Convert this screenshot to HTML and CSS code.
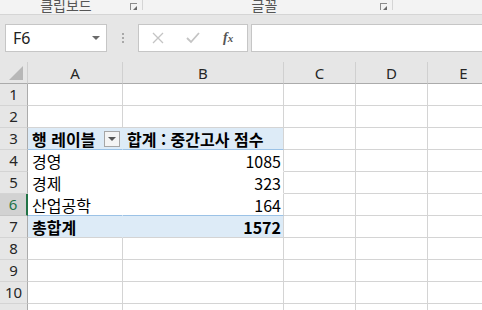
FILE: index.html
```html
<!DOCTYPE html>
<html lang="ko">
<head>
<meta charset="utf-8">
<link rel="stylesheet" href="styles.css">
</head>
<body>
<div class="ribbon">
  <div class="group g1"><span class="glabel">클립보드</span><span class="launcher"></span></div>
  <div class="group g2"><span class="glabel">글꼴</span><span class="launcher"></span></div>
  <div class="group g3"></div>
</div>
<div class="fbar">
  <div class="namebox"><span class="ref">F6</span><span class="caret"></span></div>
  <div class="dots"><i></i><i></i><i></i></div>
  <div class="fbtns">
    <svg class="ico" width="14" height="14" viewBox="0 0 14 14"><path d="M2 2 L12 12 M12 2 L2 12" stroke="#c4c4c4" stroke-width="1.3" fill="none"/></svg>
    <svg class="ico" width="16" height="14" viewBox="0 0 16 14"><path d="M2 7 L6 11 L14 2" stroke="#c4c4c4" stroke-width="1.8" fill="none"/></svg>
    <span class="fx">f<sub>x</sub></span>
  </div>
  <div class="finput"></div>
</div>
<div class="sheet">
  <div class="corner"><span class="tri"></span></div>
  <div class="ch">A</div><div class="ch">B</div><div class="ch">C</div><div class="ch">D</div><div class="ch">E</div>

  <div class="rh">1</div><div class="c"></div><div class="c"></div><div class="c"></div><div class="c"></div><div class="c"></div>
  <div class="rh">2</div><div class="c"></div><div class="c"></div><div class="c"></div><div class="c"></div><div class="c"></div>
  <div class="rh">3</div><div class="c pv hd a"><b>행 레이블</b><span class="dd"><span class="ddtri"></span></span></div><div class="c pv hd b"><b>합계 : 중간고사 점수</b></div><div class="c"></div><div class="c"></div><div class="c"></div>
  <div class="rh">4</div><div class="c pb a">경영</div><div class="c pb b num">1085</div><div class="c"></div><div class="c"></div><div class="c"></div>
  <div class="rh">5</div><div class="c pb a">경제</div><div class="c pb b num">323</div><div class="c"></div><div class="c"></div><div class="c"></div>
  <div class="rh sel">6</div><div class="c pb a last">산업공학</div><div class="c pb b num last">164</div><div class="c"></div><div class="c"></div><div class="c"></div>
  <div class="rh">7</div><div class="c pv tot a"><b>총합계</b></div><div class="c pv tot b num"><b>1572</b></div><div class="c"></div><div class="c"></div><div class="c"></div>
  <div class="rh">8</div><div class="c"></div><div class="c"></div><div class="c"></div><div class="c"></div><div class="c"></div>
  <div class="rh">9</div><div class="c"></div><div class="c"></div><div class="c"></div><div class="c"></div><div class="c"></div>
  <div class="rh">10</div><div class="c"></div><div class="c"></div><div class="c"></div><div class="c"></div><div class="c"></div>
  <div class="rh"></div><div class="c"></div><div class="c"></div><div class="c"></div><div class="c"></div><div class="c"></div>
</div>
</body>
</html>
```
FILE: styles.css
```css
* { box-sizing: border-box; }
html, body { margin: 0; padding: 0; overflow: hidden; }
body {
  width: 482px; height: 310px;
  background: #e6e6e6;
  font-family: "Noto Sans CJK KR", "Noto Sans", sans-serif;
  color: #000;
}
.ribbon {
  height: 15px;
  background: #f3f3f3;
  border-bottom: 1px solid #d5d5d5;
  display: flex;
  align-items: flex-start;
  overflow: hidden;
}
.group {
  position: relative;
  height: 10px;
  border-right: 1px solid #d5d5d5;
  display: flex;
  justify-content: center;
  align-items: flex-end;
  overflow: visible;
}
.g1 { width: 143px; }
.g2 { width: 250px; }
.g3 { flex: 1; border-right: none; }
.glabel {
  font-size: 14px;
  line-height: 14px;
  height: 14px;
  color: #555;
  margin-bottom: -2px;
  padding-right: 10px;
  white-space: nowrap;
}
.g2 .glabel { padding-right: 0; margin-left: -6px; }
.launcher {
  position: absolute;
  right: 5px; top: 3px;
  width: 7px; height: 7px;
  border-left: 1px solid #8a8a8a;
  border-top: 1px solid #8a8a8a;
}
.launcher::after {
  content: "";
  position: absolute;
  right: 0; bottom: 0;
  width: 0; height: 0;
  border-left: 4px solid transparent;
  border-bottom: 4px solid #6a6a6a;
}
.fbar {
  height: 47px;
  display: flex;
  align-items: flex-start;
  padding: 9px 0 0 5px;
}
.namebox {
  width: 102px; height: 28px;
  background: #fff;
  border: 1px solid #c6c6c6;
  display: flex;
  align-items: center;
  justify-content: space-between;
  padding: 0 6px 0 7px;
}
.ref { font-size: 16px; color: #222; font-family: "Noto Sans", sans-serif; }
.caret {
  width: 0; height: 0;
  border-left: 4px solid transparent;
  border-right: 4px solid transparent;
  border-top: 4px solid #6a6a6a;
}
.dots {
  width: 31px;
  height: 28px;
  display: flex;
  flex-direction: column;
  align-items: center;
  justify-content: center;
  gap: 2px;
}
.dots i { display: block; width: 2px; height: 2px; background: #a8a8a8; }
.fbtns {
  width: 110px; height: 28px;
  background: #fff;
  border: 1px solid #c6c6c6;
  display: flex;
  align-items: center;
  padding: 0 0 0 12px;
  gap: 22px;
}
.fbtns .ico:nth-child(2) { margin-left: -2px; }
.fx {
  font-family: "Liberation Serif", serif;
  font-style: italic;
  font-weight: bold;
  font-size: 14px;
  color: #555;
}
.fx sub { font-size: 11px; vertical-align: 0; }
.finput {
  flex: 1;
  margin-left: 3px;
  height: 28px;
  background: #fff;
  border: 1px solid #c6c6c6;
  border-right: none;
}
.sheet {
  display: grid;
  grid-template-columns: 28px 95px 161px 72px 72px 72px;
  grid-template-rows: 22px repeat(11, 22px);
  background: #fff;
}
.corner, .ch, .rh { background: #e6e6e6; }
.corner {
  position: relative;
  border-right: 1px solid #d0d0d0;
  border-bottom: 1px solid #ababab;
}
.tri {
  position: absolute;
  right: 4px; bottom: 3px;
  width: 0; height: 0;
  border-left: 14px solid transparent;
  border-bottom: 14px solid #b7b7b7;
}
.ch {
  border-right: 1px solid #d0d0d0;
  border-bottom: 1px solid #ababab;
  font-family: "Noto Sans", sans-serif;
  font-size: 15px;
  color: #262626;
  display: flex;
  align-items: center;
  justify-content: center;
  line-height: 1;
  padding-top: 1px;
}
.rh {
  border-right: 1px solid #ababab;
  border-bottom: 1px solid #d4d4d4;
  font-family: "Noto Sans", sans-serif;
  font-size: 15px;
  color: #262626;
  display: flex;
  align-items: center;
  justify-content: center;
  line-height: 1;
}
.rh.sel {
  background: #d2d2d2;
  color: #217346;
  border-right: 2px solid #217346;
  border-bottom-color: #c6c6c6;
}
.c {
  border-right: 1px solid #d4d4d4;
  border-bottom: 1px solid #d4d4d4;
  font-size: 16px;
  line-height: 20px;
  padding: 0 2px 0 4px;
  white-space: nowrap;
  overflow: visible;
  display: flex;
  align-items: center;
}
.c b { font-weight: bold; }
.pv { background: #ddebf7; }
.hd { border-bottom-color: #9bc2e6; }
.pb { border-bottom-color: #fff; }
.pb.last { border-bottom-color: #9bc2e6; }
.pv.a { border-right-color: #ddebf7; }
.pb.a { border-right-color: #fff; }
.tot { border-bottom-color: #d4d4d4; }
.num { justify-content: flex-end; }
.dd {
  margin-left: 9px;
  flex: none;
  width: 16px; height: 16px;
  border: 1px solid #a6a6a6;
  background: #f4f4f4;
  display: flex;
  align-items: center;
  justify-content: center;
}
.ddtri {
  width: 0; height: 0;
  border-left: 4px solid transparent;
  border-right: 4px solid transparent;
  border-top: 4px solid #555;
}
```
